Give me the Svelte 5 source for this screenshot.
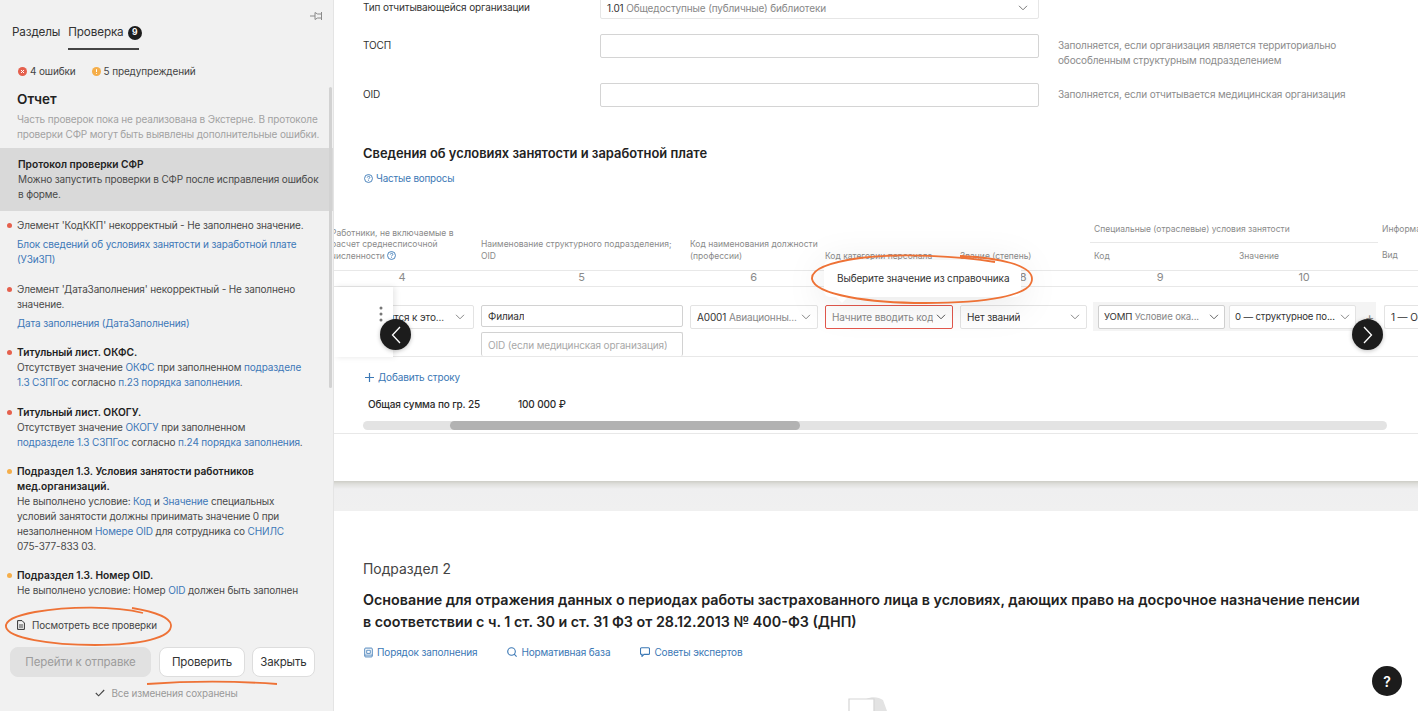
<script>
  const issues = [
    { c: 'err', parts: [[['Элемент \'КодККП\' некорректный - Не заполнено значение.']], [['Блок сведений об условиях занятости и заработной плате (УЗиЗП)', 1]]], spaced: true },
    { c: 'err', parts: [[['Элемент \'ДатаЗаполнения\' некорректный - Не заполнено значение.']], [['Дата заполнения (ДатаЗаполнения)', 1]]], spaced: true },
    { c: 'err', title: 'Титульный лист. ОКФС.', parts: [[['Отсутствует значение '], ['ОКФС', 1], [' при заполненном '], ['подразделе 1.3 СЗПГос', 1], [' согласно '], ['п.23 порядка заполнения', 1], ['.']]] },
    { c: 'err', title: 'Титульный лист. ОКОГУ.', parts: [[['Отсутствует значение '], ['ОКОГУ', 1], [' при заполненном '], ['подразделе 1.3 СЗПГос', 1], [' согласно '], ['п.24 порядка заполнения', 1], ['.']]] },
    { c: 'warn', title: 'Подраздел 1.3. Условия занятости работников мед.организаций.', parts: [[['Не выполнено условие: '], ['Код', 1], [' и '], ['Значение', 1], [' специальных условий занятости должны принимать значение 0 при незаполненном '], ['Номере OID', 1], [' для сотрудника со '], ['СНИЛС', 1], [' 075-377-833 03.']]] },
    { c: 'warn', title: 'Подраздел 1.3. Номер OID.', parts: [[['Не выполнено условие: Номер '], ['OID', 1], [' должен быть заполнен при указании кода '], ['УОМП', 1], ['.']]] }
  ];
</script>

<div class="page">
  <aside class="side">
    <div class="pin">
      <svg width="14" height="12" viewBox="0 0 14 12" fill="none" stroke="#8a8a8a" stroke-width="1"><path d="M0 6h5M5 2.5v7l2.5-1.5h4V4h-4zM11.5 2v8"/></svg>
    </div>
    <nav class="tabs">
      <span class="tab">Разделы</span>
      <span class="tab active">Проверка <b class="badge">9</b></span>
    </nav>
    <div class="summary">
      <span class="sum">
        <svg width="9" height="9" viewBox="0 0 9 9"><circle cx="4.5" cy="4.5" r="4.5" fill="#e5604d"/><path d="M3 3l3 3M6 3l-3 3" stroke="#fff" stroke-width="1"/></svg>
        4 ошибки
      </span>
      <span class="sum">
        <svg width="9" height="9" viewBox="0 0 9 9"><circle cx="4.5" cy="4.5" r="4.5" fill="#f5ae4a"/><path d="M4.5 2.2v2.8M4.5 6v.8" stroke="#fff" stroke-width="1"/></svg>
        5 предупреждений
      </span>
    </div>

    <div class="scroll">
      <div class="thumb"></div>
      <div class="report">
        <h2>Отчет</h2>
        <p>Часть проверок пока не реализована в Экстерне. В протоколе проверки СФР могут быть выявлены дополнительные ошибки.</p>
      </div>
      <div class="proto">
        <strong>Протокол проверки СФР</strong>
        <p>Можно запустить проверки в СФР после исправления ошибок в форме.</p>
      </div>
      <ul class="issues">
        {#each issues as it}
          <li class="issue {it.c}" class:spaced={it.spaced}>
            {#if it.title}<strong>{it.title}</strong>{/if}
            {#each it.parts as para}
              <p>{#each para as seg}{#if seg[1]}<span class="lnk">{seg[0]}</span>{:else}{seg[0]}{/if}{/each}</p>
            {/each}
          </li>
        {/each}
      </ul>
      <div class="fade"></div>
    </div>

    <div class="all">
      <svg width="8" height="10" viewBox="0 0 8 10" fill="none" stroke="#333" stroke-width="1"><path d="M.6.6h4.4l2.4 2.4v6.4H.6z"/><path d="M2 5h4M2 7h4" stroke-width=".9"/></svg>
      Посмотреть все проверки
    </div>
    <div class="actions">
      <button class="btn off">Перейти к отправке</button>
      <button class="btn chk">Проверить</button>
      <button class="btn cls">Закрыть</button>
    </div>
    <div class="saved">
      <svg width="10" height="8" viewBox="0 0 10 8" fill="none" stroke="#444" stroke-width="1.1"><path d="M.8 4l2.8 2.8L9.2 1"/></svg>
      Все изменения сохранены
    </div>
  </aside>

  <main class="main">
    <section class="form">
      <div class="frow first">
        <span class="lab">Тип отчитывающейся организации</span>
        <div class="ctrl sel">
          <span><i>1.01</i> <em>Общедоступные (публичные) библиотеки</em></span>
          <svg class="chev" width="10" height="6" viewBox="0 0 10 6" fill="none" stroke="#777"><path d="M1 .8l4 4 4-4"/></svg>
        </div>
      </div>
      <div class="frow tall">
        <span class="lab">ТОСП</span>
        <div class="ctrl"></div>
        <span class="hint">Заполняется, если организация является территориально обособленным структурным подразделением</span>
      </div>
      <div class="frow">
        <span class="lab">OID</span>
        <div class="ctrl"></div>
        <span class="hint">Заполняется, если отчитывается медицинская организация</span>
      </div>
    </section>

    <h3 class="sec">Сведения об условиях занятости и заработной плате</h3>
    <div class="faq">
      <svg width="9" height="9" viewBox="0 0 10 10" fill="none" stroke="#3b78b5"><circle cx="5" cy="5" r="4.4"/><path d="M3.6 4c0-1.9 2.9-1.9 2.9-.2 0 1.1-1.5 1-1.5 2.2M5 7v.8"/></svg>
      Частые вопросы
    </div>

    <div class="tbl">
      <div class="grid head">
        <div class="hc"><span>Работники, не включаемые в расчет среднесписочной численности <svg width="9" height="9" viewBox="0 0 10 10" fill="none" stroke="#3b78b5"><circle cx="5" cy="5" r="4.4"/><path d="M3.6 4c0-1.9 2.9-1.9 2.9-.2 0 1.1-1.5 1-1.5 2.2M5 7v.8"/></svg></span></div>
        <div class="hc">Наименование структурного подразделения; OID</div>
        <div class="hc">Код наименования должности (профессии)</div>
        <div class="hc">Код категории персонала</div>
        <div class="hc">Звание (степень)</div>
        <div class="hgroup">
          <div class="gt">Специальные (отраслевые) условия занятости</div>
          <div class="gs"><span>Код</span><span>Значение</span></div>
        </div>
        <div class="hgroup last">
          <div class="gt">Информация</div>
          <div class="gs"><span>Вид</span></div>
        </div>
      </div>
      <div class="grid nums">
        <span>4</span><span>5</span><span>6</span><span>7</span><span>8</span>
        <div class="n2"><span>9</span><span class="ten">10</span></div>
        <span></span>
      </div>
      <div class="grid body">
        <div class="cell">
          <div class="s end"><span class="t">Не относится к это...</span><svg class="chev" width="10" height="6" viewBox="0 0 10 6" fill="none" stroke="#888"><path d="M1 .8l4 4 4-4"/></svg></div>
        </div>
        <div class="cell stack">
          <div class="s inp"><span class="t">Филиал</span></div>
          <div class="s inp ph"><span class="t">OID (если медицинская организация)</span></div>
        </div>
        <div class="cell">
          <div class="s"><span class="t">A0001 <em>Авиационны...</em></span><svg class="chev" width="10" height="6" viewBox="0 0 10 6" fill="none" stroke="#888"><path d="M1 .8l4 4 4-4"/></svg></div>
        </div>
        <div class="cell">
          <div class="s bad"><span class="t"><em>Начните вводить код</em></span><svg class="chev" width="10" height="6" viewBox="0 0 10 6" fill="none" stroke="#555"><path d="M1 .8l4 4 4-4"/></svg></div>
        </div>
        <div class="cell">
          <div class="s"><span class="t">Нет званий</span><svg class="chev" width="10" height="6" viewBox="0 0 10 6" fill="none" stroke="#888"><path d="M1 .8l4 4 4-4"/></svg></div>
        </div>
        <div class="cell wrapc">
          <div class="special">
            <div class="s dark"><span class="t">УОМП <em>Условие ока...</em></span><svg class="chev" width="10" height="6" viewBox="0 0 10 6" fill="none" stroke="#666"><path d="M1 .8l4 4 4-4"/></svg></div>
            <div class="s"><span class="t">0 — структурное по...</span><svg class="chev" width="10" height="6" viewBox="0 0 10 6" fill="none" stroke="#888"><path d="M1 .8l4 4 4-4"/></svg></div>
            <span class="plus">+</span>
          </div>
        </div>
        <div class="cell lastc">
          <div class="s open"><span class="t">1 — Ос</span></div>
        </div>
      </div>
      <div class="foot">
        <div class="add">
          <svg width="9" height="9" viewBox="0 0 9 9" stroke="#3b78b5" stroke-width="1.2"><path d="M4.5 0v9M0 4.5h9"/></svg>
          Добавить строку
        </div>
        <div class="total"><span>Общая сумма по гр. 25</span><span>100 000 ₽</span></div>
        <div class="bar"><div class="barthumb"></div></div>
      </div>

      <div class="sticky">
        <svg width="4" height="16" viewBox="0 0 4 16" fill="#777"><circle cx="2" cy="2" r="1.5"/><circle cx="2" cy="8" r="1.5"/><circle cx="2" cy="14" r="1.5"/></svg>
      </div>
      <button class="arrow left" aria-label="Назад"><svg width="10" height="18" viewBox="0 0 10 18" fill="none" stroke="#fff" stroke-width="1.3"><path d="M9 1L1.5 9 9 17"/></svg></button>
      <button class="arrow right" aria-label="Вперёд"><svg width="10" height="18" viewBox="0 0 10 18" fill="none" stroke="#fff" stroke-width="1.3"><path d="M1 1l7.5 8L1 17"/></svg></button>
      <div class="tip">Выберите значение из справочника</div>
    </div>

    <div class="band"></div>

    <section class="sub2">
      <div class="kicker">Подраздел 2</div>
      <h2>Основание для отражения данных о периодах работы застрахованного лица в условиях, дающих право на досрочное назначение пенсии в соответствии с ч. 1 ст. 30 и ст. 31 ФЗ от 28.12.2013 № 400-ФЗ (ДНП)</h2>
      <div class="links">
        <span class="l"><svg width="9" height="11" viewBox="0 0 10 11" fill="none" stroke="#3b78b5"><rect x=".8" y=".6" width="8.4" height="9.8" rx="1"/><path d="M3 3h4v3.5H3zM1 8.4h8" stroke-width=".9"/></svg>Порядок заполнения</span>
        <span class="l"><svg width="10" height="10" viewBox="0 0 10 10" fill="none" stroke="#3b78b5" stroke-width="1.1"><circle cx="4.5" cy="4.5" r="3.8"/><path d="M7.2 7.2L9.6 9.6"/></svg>Нормативная база</span>
        <span class="l"><svg width="10" height="10" viewBox="0 0 10 10" fill="none" stroke="#3b78b5" stroke-width="1.1"><path d="M1.5.8h7a1 1 0 0 1 1 1v4.6a1 1 0 0 1-1 1H4L2 9.4V7.4h-.5a1 1 0 0 1-1-1V1.8a1 1 0 0 1 1-1z"/></svg>Советы экспертов</span>
      </div>
      <div class="illus">
        <svg width="50" height="14" viewBox="0 0 50 14"><path d="M18 2 C24 -1 31 0 35 3 L39 14 H26 V2 Z" fill="#e3e3e3"/><path d="M1 14V2h25v12" fill="#fff" stroke="#d5d5d5" stroke-width="1.2"/></svg>
      </div>
    </section>

    <button class="help" aria-label="Помощь">?</button>
  </main>

  <svg class="marks" width="1418" height="711" viewBox="0 0 1418 711" fill="none" stroke="#ee7236" stroke-width="1.8">
    <path d="M995 262 C960 256 900 253 860 258 C825 263 811 270 812 279 C815 295 870 303 925 303 C985 303 1032 296 1032 279 C1032 265 1000 258 960 256"/>
    <path d="M143 613 C115 606 70 606 35 612 C13 616 5 621 6 627 C8 638 50 645 95 645 C140 645 172 638 171 625 C170 616 150 611 132 608"/>
    <path d="M147 684 C190 681 235 681 277 684"/>
  </svg>
</div>

<style>
  :global(body) { margin: 0; }
  .page {
    position: relative; display: flex; width: 1418px; height: 711px; overflow: hidden; background: #fff;
    font-family: Inter, "Noto Sans", sans-serif; font-size: 10px; letter-spacing: -.14px; color: #2b2b2b;
  }
  p, h2, h3, ul { margin: 0; padding: 0; }

  /* sidebar */
  .side { position: relative; flex: 0 0 334px; display: flex; flex-direction: column; background: #f1f1f1; border-right: 1px solid #e4e4e4; box-sizing: border-box; }
  .pin { position: absolute; top: 10px; left: 310px; }
  .tabs { display: flex; gap: 8px; padding: 22px 0 0 12px; height: 28px; font-size: 11.7px; color: #333; }
  .tab { height: 27px; line-height: 21px; }
  .tab.active { border-bottom: 2px solid #444; width: 71px; white-space: nowrap; height: 26px; }
  .badge { display: inline-flex; align-items: center; justify-content: center; width: 14px; height: 14px; border-radius: 50%; background: #1d1d1d; color: #fff; font-size: 8.5px; font-weight: 700; margin-left: 1px; vertical-align: 1px; }
  .summary { display: flex; gap: 16px; padding: 14px 0 0 18px; height: 23px; line-height: 14px; color: #444; }
  .sum { display: inline-flex; align-items: center; gap: 3px; height: 14px; }
  .scroll { position: relative; flex: 1; min-height: 0; overflow: hidden; }
  .thumb { position: absolute; z-index: 2; top: 0; left: 329px; width: 3px; height: 301px; background: #d2d2d2; border-radius: 2px; }
  .report { padding: 4px 10px 6px 17px; }
  .report h2 { font-size: 13.5px; letter-spacing: 0; font-weight: 600; line-height: 16px; margin-bottom: 5px; color: #222; }
  .report p { color: #a2a2a2; line-height: 15px; }
  .proto { background: #d9d9d9; padding: 9px 10px 9px 18px; line-height: 15px; color: #4a4a4a; }
  .proto strong { display: block; font-size: 10.2px; letter-spacing: 0; font-weight: 600; color: #222; }
  .issues { list-style: none; padding: 7px 28px 0 17px; line-height: 15px; color: #4a4a4a; }
  .issue { position: relative; margin-bottom: 14.3px; }
  .issue:first-child { margin-bottom: 15px; }
  .issue::before { content: ""; position: absolute; left: -10px; top: 5px; width: 5px; height: 5px; border-radius: 50%; background: #e5604d; }
  .issue.warn::before { background: #f5ae4a; }
  .issue strong { display: block; font-size: 10.2px; letter-spacing: 0; font-weight: 600; color: #222; }
  .issue.spaced p + p { margin-top: 4px; }
  .lnk { color: #3d78b8; }
  .fade { position: absolute; left: 0; right: 0; bottom: 0; height: 13px; background: linear-gradient(rgba(241,241,241,0), #f1f1f1 45%); }
  .all { display: flex; align-items: center; gap: 7px; padding-left: 17px; height: 24px; margin-top: 5px; color: #444; font-size: 9.9px; }
  .actions { display: flex; padding: 10px 0 0 10px; margin-bottom: 6px; }
  .btn { font: inherit; letter-spacing: inherit; height: 30px; font-size: 11.5px; border-radius: 8px; color: #333; background: #fff; border: 1px solid #ddd; padding: 0; }
  .btn.off { width: 141px; background: #e1e1e1; border-color: #e1e1e1; color: #9c9c9c; margin-right: 8px; }
  .btn.chk { width: 86px; margin-right: 7px; }
  .btn.cls { width: 63px; }
  .saved { display: flex; align-items: center; justify-content: center; gap: 6px; height: 20px; color: #999; font-size: 9.9px; padding-bottom: 8px; }

  /* main */
  .main { position: relative; flex: 1; min-width: 0; overflow: hidden; }
  .form { display: flex; flex-direction: column; gap: 15px; margin-top: -10px; padding-left: 29px; }
  .frow { display: flex; align-items: flex-start; height: 24px; }
  .frow.first { height: 29px; }
  .frow.tall { height: 34px; }
  .lab { flex: 0 0 237px; line-height: 22px; color: #333; }
  .first .lab { line-height: 34px; }
  .ctrl { flex: 0 0 439px; box-sizing: border-box; height: 24px; border: 1px solid #d4d4d4; border-radius: 2px; }
  .ctrl.sel { height: 29px; display: flex; align-items: center; justify-content: space-between; padding: 6px 10px 0 6px; border-color: #e6e6e6; }
  .ctrl i { font-style: normal; color: #333; }
  .ctrl em, .s em { font-style: normal; color: #888; }
  .hint { margin-left: 19px; width: 300px; color: #8c8c8c; line-height: 15px; padding-top: 4px; }
  .sec { margin: 37px 0 0 29px; font-size: 12.9px; letter-spacing: 0; line-height: 20px; font-weight: 600; color: #222; }
  .faq { display: flex; align-items: center; gap: 3px; margin: 7px 0 0 30px; height: 14px; color: #3b78b5; font-size: 9.8px; }

  .tbl { position: relative; margin-top: 37px; overflow: hidden; height: 212px; border-bottom: 1px solid #e8e8e8; box-sizing: border-box; }
  .grid { display: grid; grid-template-columns: 150px 209px 135px 135px 134px 288px 120px; margin-left: -7px; }
  .head { height: 48px; font-size: 8.5px; letter-spacing: 0; line-height: 11.5px; color: #8a8a8a; }
  .hc { align-self: end; padding: 0 0 8px 4px; }
  .hc:first-child { padding-right: 16px; }
  .hc svg { vertical-align: -1px; }
  .hgroup { display: flex; flex-direction: column; }
  .gt { height: 20px; line-height: 15px; border-bottom: 1px solid #e8e8e8; padding-left: 4px; }
  .last .gt { border: 0; white-space: nowrap; }
  .gs { display: flex; padding: 8px 0 0 4px; }
  .gs span:first-child { width: 145px; }
  .nums { height: 15px; border-top: 1px solid #e8e8e8; border-bottom: 1px solid #e8e8e8; line-height: 13px; font-size: 11px; color: #8a8a8a; text-align: center; }
  .n2 { display: grid; grid-template-columns: 140px 148px; }
  .body { height: 70px; border-bottom: 1px solid #e8e8e8; box-sizing: border-box; }
  .cell { padding: 18px 3px 0 4px; min-width: 0; }
  .stack { display: flex; flex-direction: column; gap: 5px; overflow: hidden; }
  .s { position: relative; box-sizing: border-box; height: 24px; display: flex; align-items: center; justify-content: space-between; gap: 3px; padding: 0 6px; border: 1px solid #e3e3e3; border-radius: 2px; background: #fff; color: #333; white-space: nowrap; }
  .s .t { overflow: hidden; }
  .s svg { flex: none; }
  .s.end { justify-content: flex-end; gap: 11px; padding-right: 8px; }
  .s.inp { border-color: #d2d2d2; }
  .s.ph { color: #a8a8a8; flex: none; height: 24px; border-bottom: 0; }
  .s.bad { border: 1.5px solid #e2574c; }
  .s.dark { border-color: #cfcfcf; }
  .wrapc { padding: 15px 2px 0 3px; }
  .special { display: flex; align-items: center; gap: 4px; height: 29px; background: #f4f4f4; padding-left: 5px; }
  .special .s { width: 127px; flex: none; padding: 0 5px; font-size: 9.6px; }
  .plus { margin-left: 5px; color: #8a8a8a; font-size: 14px; }
  .lastc { padding-left: 6px; padding-right: 0; }
  .s.open { border-right: 0; justify-content: flex-start; }
  .foot { padding: 0 0 0 29px; }
  .add { display: flex; align-items: center; gap: 4px; margin: 13px 0 0 2px; height: 14px; color: #3b78b5; }
  .total { display: flex; margin: 13px 0 0 5px; height: 14px; line-height: 14px; font-weight: 500; color: #2b2b2b; }
  .total span:first-child { width: 150px; }
  .bar { position: relative; margin-top: 10px; width: 1024px; height: 9px; border-radius: 5px; background: #e3e3e3; }
  .barthumb { position: absolute; left: 87px; width: 350px; height: 100%; border-radius: 5px; background: #b2b2b2; }
  .sticky { position: absolute; left: 0; top: 65px; width: 59px; height: 70px; background: #fff; box-shadow: 2px 0 6px rgba(0,0,0,.1); display: flex; justify-content: flex-end; padding: 19px 10px 0 0; box-sizing: border-box; }
  .arrow { position: absolute; top: 97px; width: 31px; height: 31px; border-radius: 50%; border: 0; padding: 0; background: #1c1c1c; display: flex; align-items: center; justify-content: center; box-shadow: 0 1px 4px rgba(0,0,0,.25); }
  .arrow.left { left: 46px; }
  .arrow.right { left: 1018px; }
  .tip { position: absolute; left: 490px; top: 38px; height: 37px; box-sizing: border-box; padding: 0 13px; width: 197px; line-height: 37px; white-space: nowrap; background: #fff; border-radius: 6px; box-shadow: 0 6px 40px rgba(0,0,0,.1); color: #333; }
  .tip::after { content: ""; position: absolute; left: 12px; top: 37px; border: 6px solid transparent; border-top-color: #fff; }

  .band { margin-top: 47px; height: 30px; background: linear-gradient(#cdcdc6 0, #dfdfdc 3px, #efeff0 8px, #f0f0f0 100%); }
  .sub2 { padding: 49px 0 0 29px; }
  .kicker { font-size: 13.9px; letter-spacing: 0; line-height: 18px; color: #444; }
  .sub2 h2 { margin-top: 11px; width: 1002px; font-size: 14.3px; letter-spacing: 0; line-height: 22px; font-weight: 600; color: #222; }
  .links { display: flex; gap: 30px; margin-top: 12px; height: 14px; padding-left: 1px; color: #3b78b5; }
  .l { display: inline-flex; align-items: center; gap: 4px; }
  .illus { display: flex; justify-content: center; margin: 38px 0 0 -29px; }
  .illus svg { margin-left: -6px; }
  .help { position: absolute; left: 1038px; top: 666px; width: 30px; height: 30px; border-radius: 50%; border: 0; padding: 0; background: #1c1c1c; color: #fff; font: 600 14px Inter, sans-serif; }

  .marks { position: absolute; left: 0; top: 0; pointer-events: none; }
</style>
